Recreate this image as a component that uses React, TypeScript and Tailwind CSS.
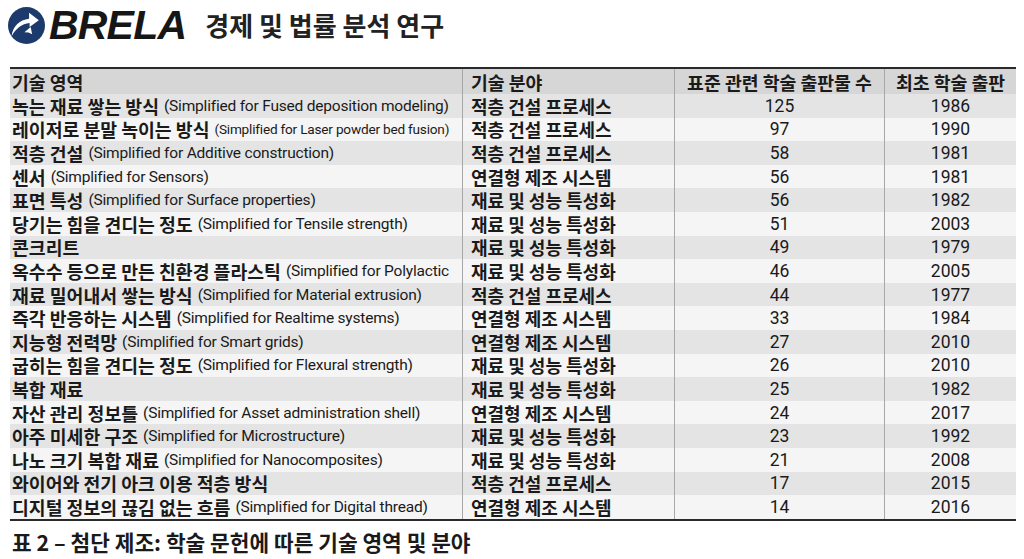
import React from "react";

type Row = {
  ko: string;
  en?: string;
  enSize?: string;
  field: string;
  count: number;
  year: number;
};

const rows: Row[] = [
  { ko: "녹는 재료 쌓는 방식", en: "(Simplified for Fused deposition modeling)", field: "적층 건설 프로세스", count: 125, year: 1986 },
  { ko: "레이저로 분말 녹이는 방식", en: "(Simplified for Laser powder bed fusion)", enSize: "text-[13.6px]", field: "적층 건설 프로세스", count: 97, year: 1990 },
  { ko: "적층 건설", en: "(Simplified for Additive construction)", field: "적층 건설 프로세스", count: 58, year: 1981 },
  { ko: "센서", en: "(Simplified for Sensors)", field: "연결형 제조 시스템", count: 56, year: 1981 },
  { ko: "표면 특성", en: "(Simplified for Surface properties)", field: "재료 및 성능 특성화", count: 56, year: 1982 },
  { ko: "당기는 힘을 견디는 정도", en: "(Simplified for Tensile strength)", field: "재료 및 성능 특성화", count: 51, year: 2003 },
  { ko: "콘크리트", field: "재료 및 성능 특성화", count: 49, year: 1979 },
  { ko: "옥수수 등으로 만든 친환경 플라스틱", en: "(Simplified for Polylactic", field: "재료 및 성능 특성화", count: 46, year: 2005 },
  { ko: "재료 밀어내서 쌓는 방식", en: "(Simplified for Material extrusion)", field: "적층 건설 프로세스", count: 44, year: 1977 },
  { ko: "즉각 반응하는 시스템", en: "(Simplified for Realtime systems)", field: "연결형 제조 시스템", count: 33, year: 1984 },
  { ko: "지능형 전력망", en: "(Simplified for Smart grids)", field: "연결형 제조 시스템", count: 27, year: 2010 },
  { ko: "굽히는 힘을 견디는 정도", en: "(Simplified for Flexural strength)", field: "재료 및 성능 특성화", count: 26, year: 2010 },
  { ko: "복합 재료", field: "재료 및 성능 특성화", count: 25, year: 1982 },
  { ko: "자산 관리 정보틀", en: "(Simplified for Asset administration shell)", field: "연결형 제조 시스템", count: 24, year: 2017 },
  { ko: "아주 미세한 구조", en: "(Simplified for Microstructure)", field: "재료 및 성능 특성화", count: 23, year: 1992 },
  { ko: "나노 크기 복합 재료", en: "(Simplified for Nanocomposites)", field: "재료 및 성능 특성화", count: 21, year: 2008 },
  { ko: "와이어와 전기 아크 이용 적층 방식", field: "적층 건설 프로세스", count: 17, year: 2015 },
  { ko: "디지털 정보의 끊김 없는 흐름", en: "(Simplified for Digital thread)", field: "연결형 제조 시스템", count: 14, year: 2016 },
];

const ko = "font-['Noto_Sans_CJK_KR',sans-serif]";
const en = "font-['Roboto','Noto_Sans_CJK_KR',sans-serif]";
const cols = "grid grid-cols-[452px_212px_210px_132px]";

function Logo() {
  return (
    <svg width="37" height="37" viewBox="0 0 36 36">
      <circle cx="18" cy="18" r="18" fill="#1d3a6c" />
      {/* curved arrow band with head */}
      <path
        d="M3.5 28.5 C4.5 19 11 12.5 20.5 11.5 L20.5 5.5 L30 13 L21 19.5 L21 15.5 C13.5 16 7.5 21 3.5 28.5 Z"
        fill="#fff"
      />
      {/* small notch below the arrow */}
      <path d="M16 24.5 L22 19.5 L23.5 26.5 L20 24.8 Z" fill="#fff" />
    </svg>
  );
}

export default function App() {
  return (
    <div className="w-[1024px] h-[559px] bg-white overflow-hidden text-[#1a1a1a]">
      {/* Brand header */}
      <div className="h-[50px] flex items-center pl-[8px]">
        <Logo />
        <span className="ml-[4px] font-['Liberation_Sans',sans-serif] font-bold italic text-[41px] leading-none tracking-[-0.8px] text-[#161616]">
          BRELA
        </span>
        <span className={`${ko} ml-[19px] text-[26px] font-semibold leading-none text-[#222]`}>
          경제 및 법률 분석 연구
        </span>
      </div>

      {/* Table */}
      <div className="mt-[17px] mx-[10px] w-[1006px] border-t-2 border-b-2 border-[#2a2a2a]">
        <div className={`${cols} h-[25px] bg-[#d6d6d6] text-[18.3px] font-semibold ${ko}`}>
          <div className="pl-[2px] flex items-center">
            <span className="inline-block leading-[20px]">기술 영역</span>
          </div>
          <div className="pl-[8px] flex items-center border-l border-[#a8a8a8]">
            <span className="inline-block leading-[20px]">기술 분야</span>
          </div>
          <div className="flex items-center justify-center border-l border-[#a8a8a8]">
            <span className="inline-block leading-[20px]">표준 관련 학술 출판물 수</span>
          </div>
          <div className="flex items-center justify-center border-l border-[#a8a8a8]">
            <span className="inline-block leading-[20px]">최초 학술 출판</span>
          </div>
        </div>
        {rows.map((r, i) => (
          <div key={i} className={`${cols} h-[23.6px] ${i % 2 === 0 ? "bg-[#e4e4e4]" : "bg-[#f5f5f5]"}`}>
            <div className="pl-[2px] flex items-center whitespace-nowrap">
              <span className={`${ko} inline-block leading-[20px] text-[18.3px] font-semibold`}>{r.ko}</span>
              {r.en && (
                <span className={`${en} inline-block leading-[20px] ${r.enSize ?? "text-[15.5px]"} tracking-[-0.2px] ml-[5px]`}>
                  {r.en}
                </span>
              )}
            </div>
            <div className="pl-[8px] flex items-center border-l border-[#a8a8a8]">
              <span className={`${ko} inline-block leading-[20px] text-[18px] font-semibold`}>{r.field}</span>
            </div>
            <div className="flex items-center justify-center border-l border-[#a8a8a8]">
              <span className={`${en} inline-block leading-[20px] text-[17.5px]`}>{r.count}</span>
            </div>
            <div className="flex items-center justify-center border-l border-[#a8a8a8]">
              <span className={`${en} inline-block leading-[20px] text-[17.5px]`}>{r.year}</span>
            </div>
          </div>
        ))}
      </div>

      {/* Caption */}
      <div className={`mt-[10px] pl-[12px] ${ko} text-[21.4px] font-semibold leading-none text-[#1a1a1a]`}>
        표 2 – 첨단 제조: 학술 문헌에 따른 기술 영역 및 분야
      </div>
    </div>
  );
}
